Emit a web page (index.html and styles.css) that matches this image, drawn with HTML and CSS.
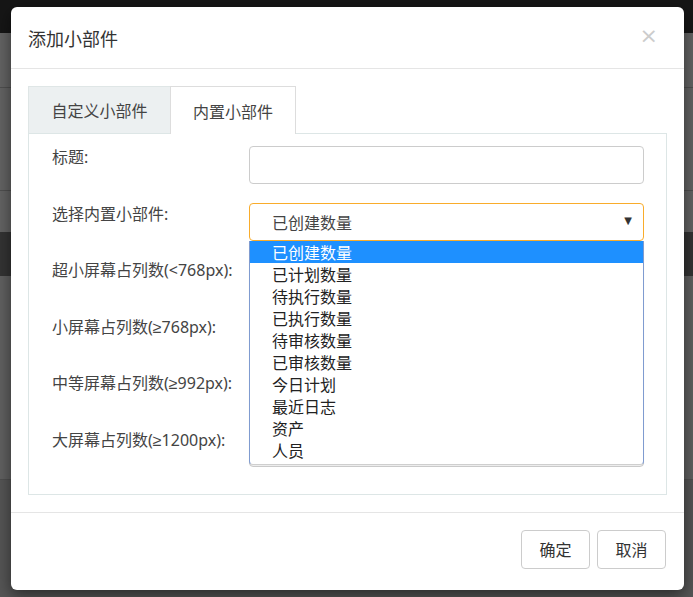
FILE: index.html
```html
<!DOCTYPE html>
<html lang="zh-CN">
<head>
<meta charset="utf-8">
<title>添加小部件</title>
<link rel="stylesheet" href="styles.css">
</head>
<body>
<div class="page">
  <div class="topbar"></div>
  <div class="sec sec-a"></div>
  <div class="sec sec-b"></div>
  <div class="sec sec-c"></div>
  <div class="sec sec-dark"></div>
  <div class="sec sec-d"></div>
  <div class="sec sec-e">
    <span class="bg-text t1">待执行</span>
    <span class="bg-text t2">已执行</span>
  </div>
</div>

<div class="modal">
  <div class="modal-header">
    <h4 class="modal-title">添加小部件</h4>
    <span class="close">×</span>
  </div>
  <div class="modal-body">
    <div class="tabs">
      <div class="tab">自定义小部件</div>
      <div class="tab active">内置小部件</div>
    </div>
    <div class="panel">
      <div class="row">
        <label class="label">标题:</label>
        <div class="control"><div class="input"></div></div>
      </div>
      <div class="row">
        <label class="label">选择内置小部件:</label>
        <div class="control select-wrap">
          <div class="select"><span>已创建数量</span><span class="arrow">▼</span></div>
          <ul class="dropdown">
            <li class="opt selected">已创建数量</li>
            <li class="opt">已计划数量</li>
            <li class="opt">待执行数量</li>
            <li class="opt">已执行数量</li>
            <li class="opt">待审核数量</li>
            <li class="opt">已审核数量</li>
            <li class="opt">今日计划</li>
            <li class="opt">最近日志</li>
            <li class="opt">资产</li>
            <li class="opt">人员</li>
          </ul>
        </div>
      </div>
      <div class="row">
        <label class="label">超小屏幕占列数(&lt;768px):</label>
        <div class="control"><div class="input"></div></div>
      </div>
      <div class="row">
        <label class="label">小屏幕占列数(<span class="sym">≥</span>768px):</label>
        <div class="control"><div class="input"></div></div>
      </div>
      <div class="row">
        <label class="label">中等屏幕占列数(<span class="sym">≥</span>992px):</label>
        <div class="control"><div class="input"></div></div>
      </div>
      <div class="row">
        <label class="label">大屏幕占列数(<span class="sym">≥</span>1200px):</label>
        <div class="control"><div class="input"></div></div>
      </div>
    </div>
  </div>
  <div class="modal-footer">
    <button class="btn">确定</button>
    <button class="btn">取消</button>
  </div>
</div>
</body>
</html>
```

FILE: styles.css
```css
* { box-sizing: border-box; }
html, body { margin: 0; padding: 0; }
body {
  width: 693px;
  height: 597px;
  overflow: hidden;
  background: #636363;
  font-family: "Noto Sans", "Noto Sans CJK SC", sans-serif;
  position: relative;
}

/* dimmed page behind the modal */
.page { display: flex; flex-direction: column; height: 597px; }
.topbar { height: 33px; background: #161616; flex: none; }
.sec { flex: none; background: #636363; border-bottom: 1px solid #4f4f4f; }
.sec-a { height: 55px; }
.sec-b { height: 103px; }
.sec-c { height: 41px; border-bottom: 0; }
.sec-dark { height: 44px; background: #333333; border-bottom: 0; }
.sec-d { height: 204px; background: #606060; }
.sec-e { flex: 1; background: #555555; border-bottom: 0; position: relative; }
.bg-text {
  position: absolute;
  top: 86px;
  font-size: 16px;
  color: #2a2a2a;
  font-family: "Noto Sans CJK SC", sans-serif;
}
.t1 { left: 108px; }
.t2 { left: 414px; }

/* modal */
.modal {
  position: absolute;
  left: 11px;
  top: 7px;
  width: 673px;
  background: #fff;
  border-radius: 6px;
  box-shadow: 0 5px 15px rgba(0,0,0,.5);
}
.modal-header {
  height: 62px;
  padding: 0 17px;
  border-bottom: 1px solid #e5e5e5;
  display: flex;
  align-items: center;
  justify-content: space-between;
}
.modal-title {
  margin: 0;
  font-size: 18px;
  font-weight: normal;
  color: #333;
  line-height: 24px;
  font-family: "Noto Sans CJK SC", sans-serif;
}
.close {
  font-size: 22px;
  line-height: 22px;
  color: #cccccc;
  font-family: "DejaVu Sans", sans-serif;
  margin-right: 9px;
  margin-top: -3px;
}

.modal-body { padding: 17px; }
.tabs { display: flex; height: 47px; }
.tab {
  display: flex;
  align-items: center;
  justify-content: center;
  font-size: 16px;
  color: #444;
  font-family: "Noto Sans CJK SC", sans-serif;
  border: 1px solid #dfe6e6;
  border-bottom: 0;
}
.tab:first-child { width: 142px; background: #ecf0f1; border-right: 0; }
.tab.active {
  width: 126px;
  background: #fff;
  border-color: #dddddd;
  position: relative;
  z-index: 1;
  margin-bottom: -1px;
  height: 48px;
}

.panel {
  border: 1px solid #dde6e6;
  padding: 12px 22px 27px 23px;
  display: flex;
  flex-direction: column;
  gap: 18.6px;
}
.row { display: flex; height: 38px; }
.label {
  width: 197px;
  flex: none;
  font-size: 16px;
  line-height: 22px;
  color: #444;
}
.sym { font-family: "Liberation Sans", sans-serif; }
.control { flex: 1; }
.input {
  height: 38px;
  border: 1px solid #cccccc;
  border-radius: 4px;
}
.select-wrap { position: relative; }
.select {
  height: 38px;
  border: 1px solid #f9ac2b;
  border-radius: 4px;
  display: flex;
  align-items: center;
  justify-content: space-between;
  padding: 0 11px 0 22px;
  font-size: 16px;
  color: #444;
  font-family: "Noto Sans CJK SC", sans-serif;
}
.arrow {
  font-size: 10px;
  color: #333;
  font-family: "DejaVu Sans", sans-serif;
  margin-top: -2px;
}
.dropdown {
  position: absolute;
  left: 0;
  right: 0;
  top: 38px;
  margin: 0;
  padding: 0 0 3px;
  list-style: none;
  background: #fff;
  border: 1px solid #7f9bd0;
  border-top: 0;
  border-bottom: 1px solid #cfcfcf;
  border-radius: 0 0 4px 4px;
  box-shadow: 0 1px 1px rgba(0,0,0,.08);
  z-index: 5;
}
.opt {
  height: 22px;
  line-height: 22px;
  padding-left: 22px;
  font-size: 16px;
  color: #222;
  font-family: "Noto Sans CJK SC", sans-serif;
}
.opt.selected { background: #1e90ff; color: #fff; }

.modal-footer {
  border-top: 1px solid #e5e5e5;
  padding: 17px 18px 21px;
  display: flex;
  justify-content: flex-end;
  gap: 7px;
}
.btn {
  height: 39px;
  padding: 0 17.5px;
  border: 1px solid #cccccc;
  border-radius: 4px;
  background: #fff;
  font-size: 16px;
  color: #333;
  font-family: "Noto Sans CJK SC", sans-serif;
}
```
